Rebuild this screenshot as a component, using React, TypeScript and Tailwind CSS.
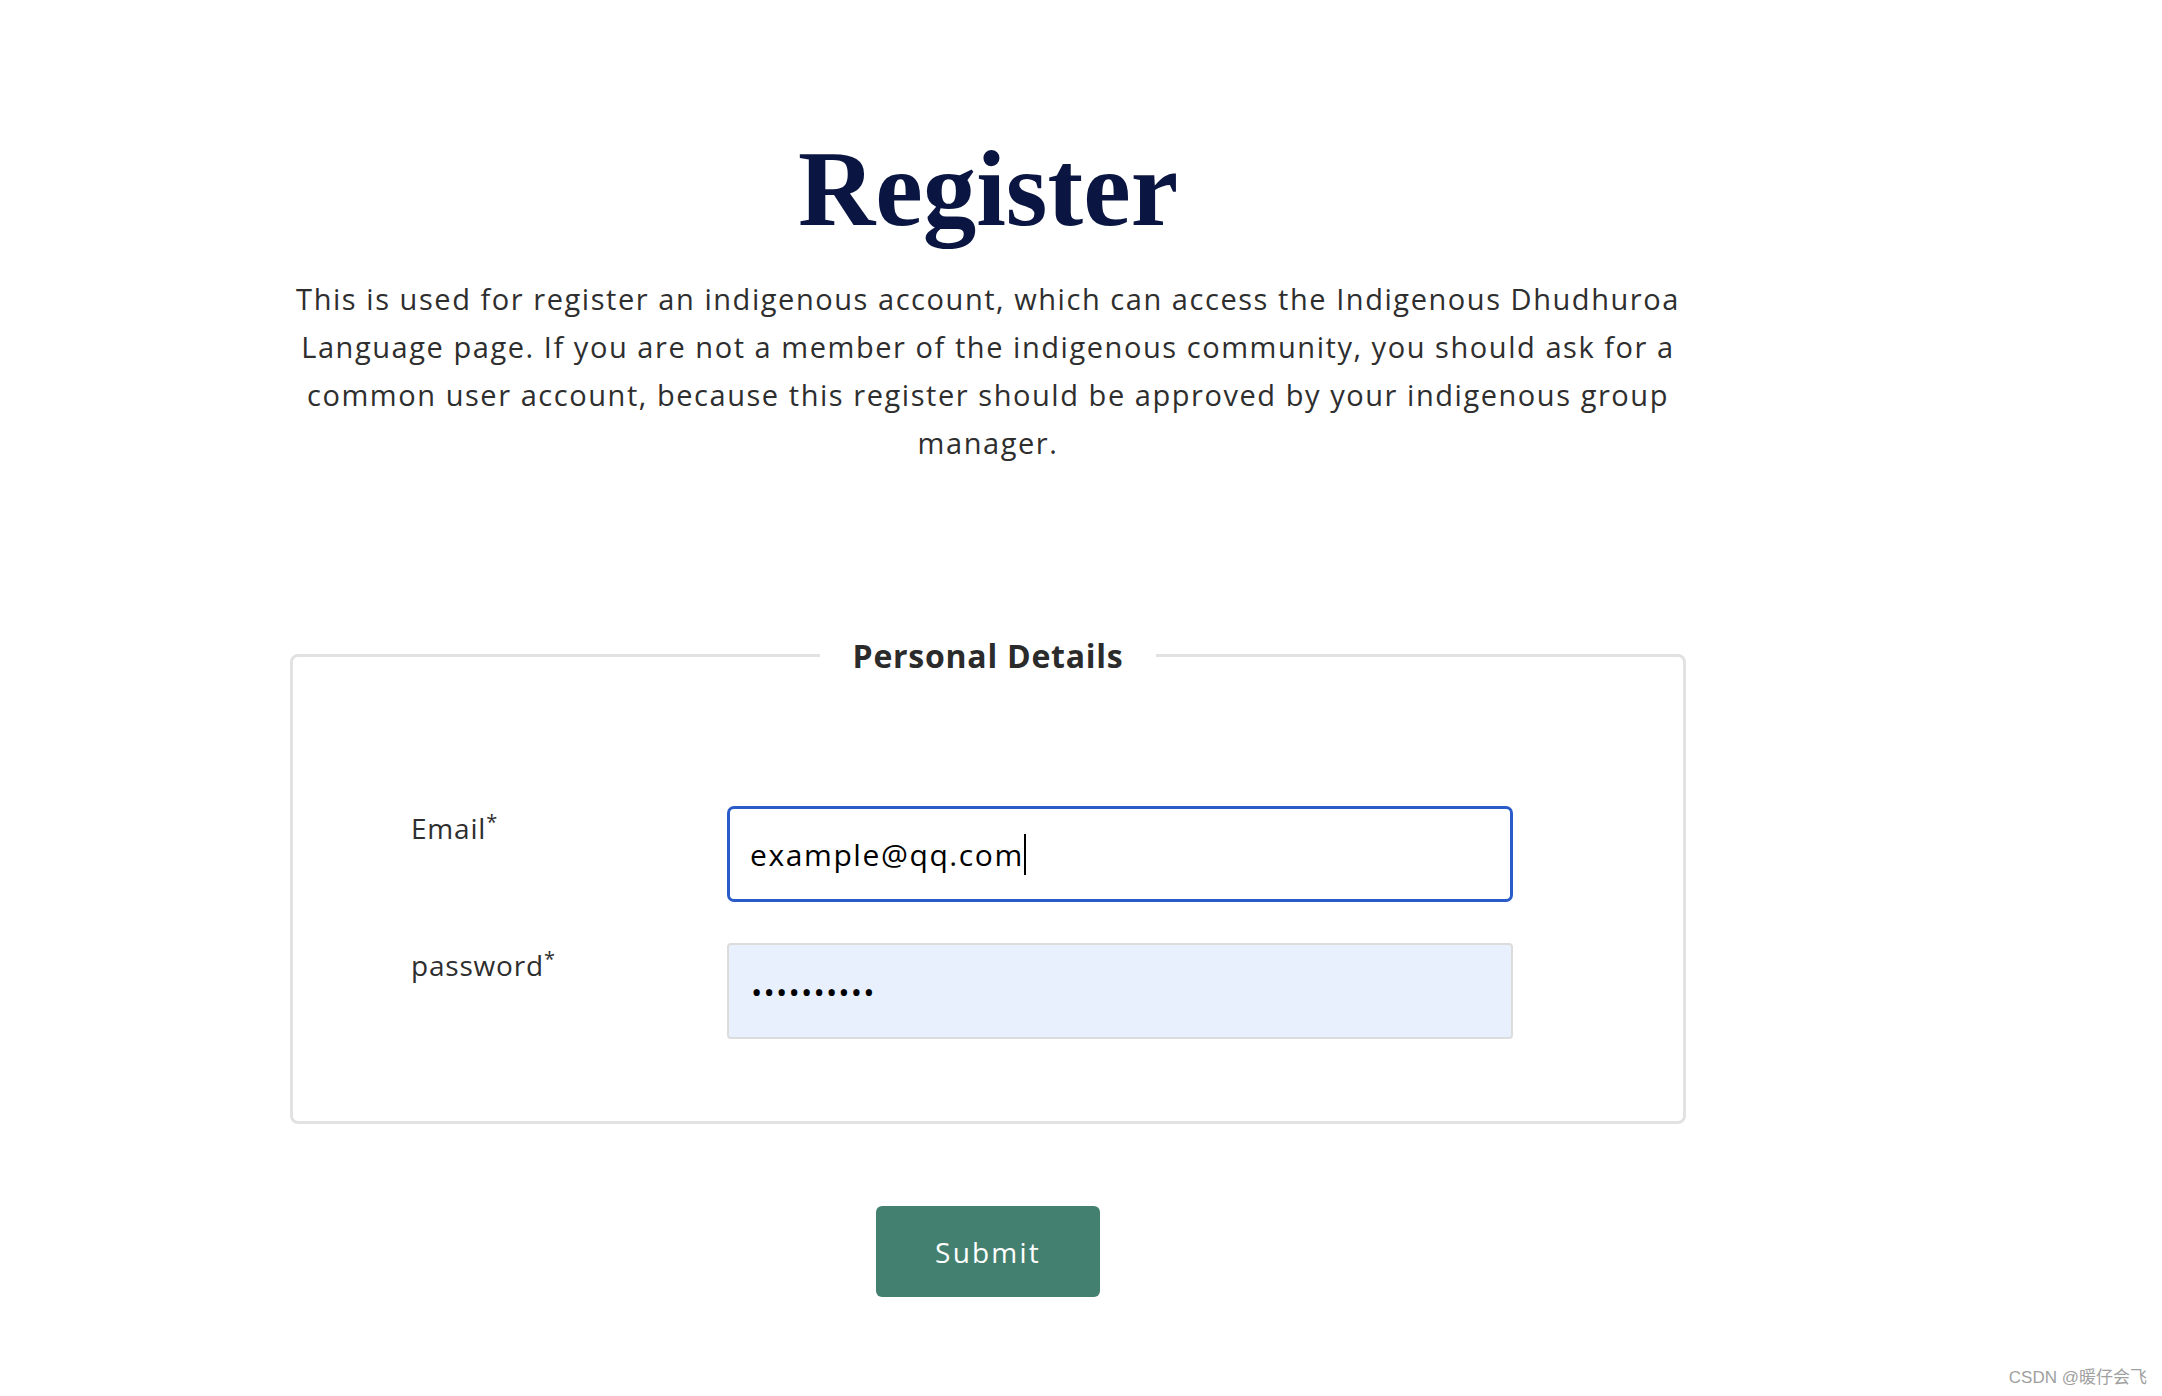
import React from "react";

const lines = [
  "This is used for register an indigenous account, which can access the Indigenous Dhudhuroa",
  "Language page. If you are not a member of the indigenous community, you should ask for a",
  "common user account, because this register should be approved by your indigenous group",
  "manager.",
];

export default function App() {
  return (
    <div className="min-h-[1396px] w-full bg-white relative" style={{ fontFamily: '"Open Sans", sans-serif' }}>
      <div className="pl-[290px] pt-[136px]">
        <div className="w-[1396px] flex flex-col items-center">
          <h1
            className="text-[107px] leading-none font-bold text-[#0a1541]"
            style={{ fontFamily: '"Liberation Serif", serif' }}
          >
            Register
          </h1>
          <p className="mt-[32px] text-[29px] leading-[48px] tracking-[1.55px] text-[#2e2e2e] text-center">
            {lines.map((l, i) => (
              <span key={i} className="block">
                {l}
              </span>
            ))}
          </p>

          <fieldset className="mt-[166px] w-full border-[3px] border-[#e2e2e2] rounded-lg px-[118px] pt-[128px] pb-[82px]">
            <legend className="mx-auto px-[33px] text-[32px] leading-[45px] font-bold tracking-[0.75px] text-[#2b2b2b]">
              Personal Details
            </legend>
            <div className="flex flex-col gap-[41px]">
              <div className="flex items-start">
                <label className="w-[316px] pt-[2px] text-[28px] leading-[40px] tracking-[0.8px] text-[#2e2e2e]">
                  Email
                  <sup className="text-[20px]">*</sup>
                </label>
                <div className="w-[786px] h-[96px] border-[3px] border-[#2a5cc9] rounded-[7px] pl-[20px] flex items-center text-[30px] tracking-[1.6px] text-black">
                  <span>example@qq.com</span>
                  <span className="inline-block w-[2px] h-[41px] bg-black" />
                </div>
              </div>
              <div className="flex items-start">
                <label className="w-[316px] pt-[2px] text-[28px] leading-[40px] tracking-[0.8px] text-[#2e2e2e]">
                  password
                  <sup className="text-[20px]">*</sup>
                </label>
                <input
                  type="password"
                  readOnly
                  value="1234567890"
                  className="w-[786px] h-[96px] border-2 border-[#dcdcdc] rounded-[4px] bg-[#e8f0fe] pl-[22px] text-[30px] tracking-[1.2px] text-black outline-none"
                />
              </div>
            </div>
          </fieldset>

          <button className="mt-[82px] w-[224px] h-[91px] rounded-[6px] bg-[#44806f] text-white text-[28px] font-medium tracking-[2.2px]">
            Submit
          </button>
        </div>
      </div>
      <div
        className="absolute right-[15px] bottom-[6px] text-[17px] text-[#a0a0a0]"
        style={{ fontFamily: '"Liberation Sans", "Noto Sans CJK SC", sans-serif' }}
      >
        CSDN @暖仔会飞
      </div>
    </div>
  );
}
